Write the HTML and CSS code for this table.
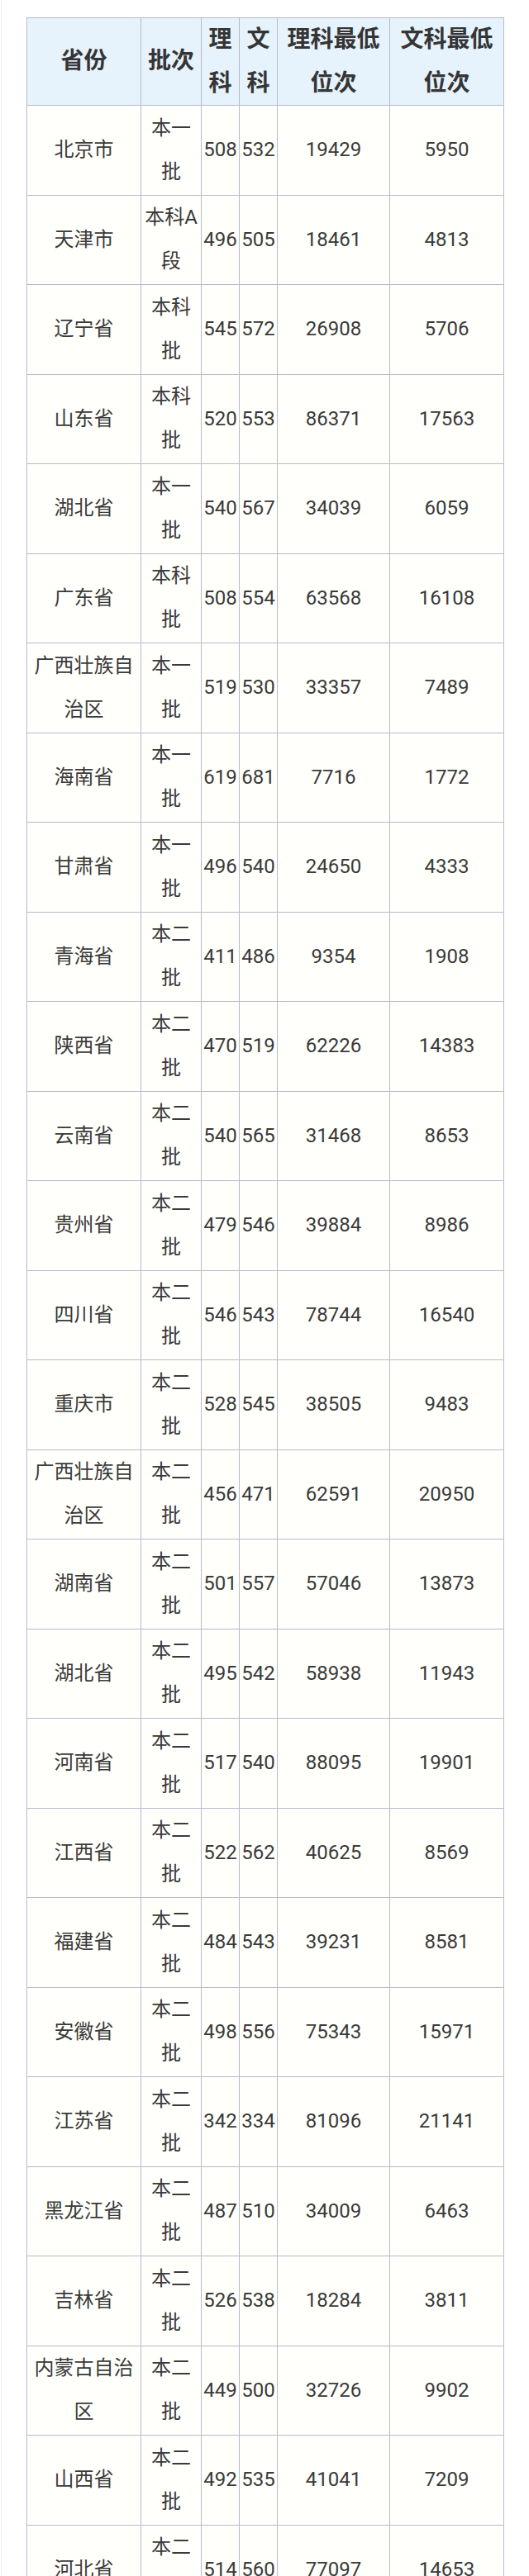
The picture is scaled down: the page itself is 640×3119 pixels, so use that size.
FILE: index.html
```html
<!DOCTYPE html>
<html lang="zh">
<head>
<meta charset="utf-8">
<title>分数线</title>
<link rel="stylesheet" href="styles.css">
</head>
<body>
<div class="page">
<table class="scores">
<colgroup>
<col class="c-prov"><col class="c-batch"><col class="c-num"><col class="c-num"><col class="c-rank"><col class="c-rank2">
</colgroup>
<thead>
<tr><th>省份</th><th>批次</th><th>理科</th><th>文科</th><th>理科最低位次</th><th>文科最低位次</th></tr>
</thead>
<tbody>
<tr><td>北京市</td><td>本一批</td><td>508</td><td>532</td><td>19429</td><td>5950</td></tr>
<tr><td>天津市</td><td>本科A段</td><td>496</td><td>505</td><td>18461</td><td>4813</td></tr>
<tr><td>辽宁省</td><td>本科批</td><td>545</td><td>572</td><td>26908</td><td>5706</td></tr>
<tr><td>山东省</td><td>本科批</td><td>520</td><td>553</td><td>86371</td><td>17563</td></tr>
<tr><td>湖北省</td><td>本一批</td><td>540</td><td>567</td><td>34039</td><td>6059</td></tr>
<tr><td>广东省</td><td>本科批</td><td>508</td><td>554</td><td>63568</td><td>16108</td></tr>
<tr><td>广西壮族自治区</td><td>本一批</td><td>519</td><td>530</td><td>33357</td><td>7489</td></tr>
<tr><td>海南省</td><td>本一批</td><td>619</td><td>681</td><td>7716</td><td>1772</td></tr>
<tr><td>甘肃省</td><td>本一批</td><td>496</td><td>540</td><td>24650</td><td>4333</td></tr>
<tr><td>青海省</td><td>本二批</td><td>411</td><td>486</td><td>9354</td><td>1908</td></tr>
<tr><td>陕西省</td><td>本二批</td><td>470</td><td>519</td><td>62226</td><td>14383</td></tr>
<tr><td>云南省</td><td>本二批</td><td>540</td><td>565</td><td>31468</td><td>8653</td></tr>
<tr><td>贵州省</td><td>本二批</td><td>479</td><td>546</td><td>39884</td><td>8986</td></tr>
<tr><td>四川省</td><td>本二批</td><td>546</td><td>543</td><td>78744</td><td>16540</td></tr>
<tr><td>重庆市</td><td>本二批</td><td>528</td><td>545</td><td>38505</td><td>9483</td></tr>
<tr><td>广西壮族自治区</td><td>本二批</td><td>456</td><td>471</td><td>62591</td><td>20950</td></tr>
<tr><td>湖南省</td><td>本二批</td><td>501</td><td>557</td><td>57046</td><td>13873</td></tr>
<tr><td>湖北省</td><td>本二批</td><td>495</td><td>542</td><td>58938</td><td>11943</td></tr>
<tr><td>河南省</td><td>本二批</td><td>517</td><td>540</td><td>88095</td><td>19901</td></tr>
<tr><td>江西省</td><td>本二批</td><td>522</td><td>562</td><td>40625</td><td>8569</td></tr>
<tr><td>福建省</td><td>本二批</td><td>484</td><td>543</td><td>39231</td><td>8581</td></tr>
<tr><td>安徽省</td><td>本二批</td><td>498</td><td>556</td><td>75343</td><td>15971</td></tr>
<tr><td>江苏省</td><td>本二批</td><td>342</td><td>334</td><td>81096</td><td>21141</td></tr>
<tr><td>黑龙江省</td><td>本二批</td><td>487</td><td>510</td><td>34009</td><td>6463</td></tr>
<tr><td>吉林省</td><td>本二批</td><td>526</td><td>538</td><td>18284</td><td>3811</td></tr>
<tr><td>内蒙古自治区</td><td>本二批</td><td>449</td><td>500</td><td>32726</td><td>9902</td></tr>
<tr><td>山西省</td><td>本二批</td><td>492</td><td>535</td><td>41041</td><td>7209</td></tr>
<tr><td>河北省</td><td>本二批</td><td>514</td><td>560</td><td>77097</td><td>14653</td></tr>
</tbody>
</table>
</div>
</body>
</html>
```
FILE: styles.css
```css
html, body {
  margin: 0;
  padding: 0;
  background: #ffffff;
}

.page {
  margin-left: 1px;
  border-left: 1px solid #ededed;
  height: 3119px;
  overflow: hidden;
  box-sizing: border-box;
  padding: 21px 0 0 30px;
  font-family: Roboto, "Noto Sans CJK SC", "Noto Sans", sans-serif;
  color: #3a3a3a;
}

.scores {
  border-collapse: collapse;
  table-layout: fixed;
  width: 577px;
}

.c-prov { width: 138px; }
.c-batch { width: 73px; }
.c-num { width: 46px; }
.c-rank { width: 136px; }
.c-rank2 { width: 138px; }

.scores th,
.scores td {
  border: 1px solid #b9b9cc;
  text-align: center;
  vertical-align: middle;
}

.scores th {
  background: #e6f2fc;
  font-size: 28px;
  font-weight: bold;
  line-height: 52.5px;
  padding: 0 2px;
  color: #353535;
}

.scores td {
  background: #fffffb;
  font-size: 24px;
  line-height: 53.25px;
  padding: 0.5px 2px;
}
```
